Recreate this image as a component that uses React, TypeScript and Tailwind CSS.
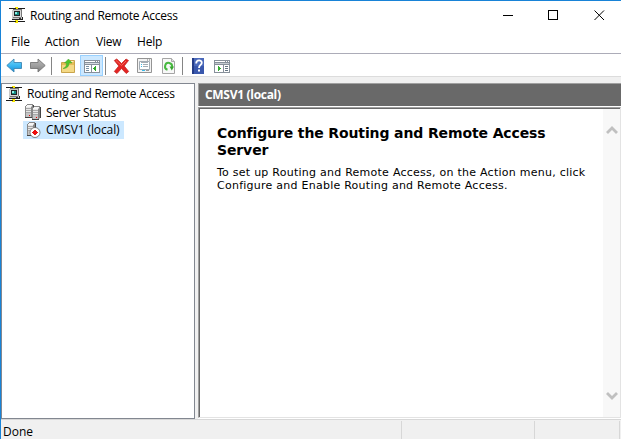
import type { ReactNode } from 'react';

function Svg({ w = 16, h = 16, crisp = false, className = '', children }: { w?: number; h?: number; crisp?: boolean; className?: string; children: ReactNode }) {
  return (
    <svg width={w} height={h} viewBox={`0 0 ${w} ${h}`} fill="none" shapeRendering={crisp ? 'crispEdges' : 'auto'} className={`block shrink-0 ${className}`}>
      {children}
    </svg>
  );
}

function RoutingIcon({ className = '' }: { className?: string }) {
  return (
    <Svg crisp className={className}>
      <path d="M0 1h16v1H0zM0 14h16v1H0z" fill="#1c1c1c" />
      <path d="M6 0h3v1H6zM7 1h2v1H7zM6 13h3v1H6zM6 15h3v1H6zM7 14h2v1H7z" fill="#f5e400" />
      <path d="M3 3h9v8H3z" fill="#dadada" />
      <path d="M4 2h9v1H4zM12 3h1v7h-1z" fill="#777" />
      <path d="M3 3h9v1H3zM3 4h1v6H3z" fill="#c8c8c8" />
      <path d="M5 4h6v5H5z" fill="#222" />
      <path d="M6 5h4v3H6z" fill="#168b83" />
      <path d="M6 5h2v2H6z" fill="#8bf2e6" />
      <path d="M3 10h10v2H3z" fill="#c6c6c6" />
      <path d="M4 10h8v1H4z" fill="#777" />
      <path d="M3 12h11v1H3zM13 10h1v3h-1z" fill="#222" />
      <path d="M10 11h2v1h-2z" fill="#333" />
    </Svg>
  );
}

function Tower({ x, y }: { x: number; y: number }) {
  return (
    <g transform={`translate(${x} ${y})`} shapeRendering="crispEdges">
      <path d="M2 0h6v1H2zM1 1h7v1H1zM0 2h8v11H0z" fill="#c4c4c4" />
      <path d="M2 0h6v1H2zM1 1h1v1H1zM0 2h1v11H0z" fill="#888" />
      <path d="M2 1h5v1H2zM1 2h5v1H1z" fill="#f6f6f6" />
      <path d="M1 3h5v1H1zM1 5h5v1H1zM1 7h5v1H1z" fill="#e6e6e6" />
      <path d="M1 4h5v1H1zM1 6h5v1H1zM1 8h5v1H1z" fill="#a8a8a8" />
      <path d="M6 3h1v10H6zM7 1h1v11H7z" fill="#888" />
      <path d="M0 13h7v1H0zM8 1h1v11H8z" fill="#444" />
    </g>
  );
}

function ServersIcon() {
  return (
    <Svg>
      <Tower x={0} y={0} />
      <Tower x={7} y={2} />
      <path d="M4 11h1v1H4zM11 13h1v1h-1z" fill="#f00000" />
    </Svg>
  );
}

function StoppedServerIcon() {
  return (
    <Svg>
      <Tower x={1} y={0} />
      <circle cx="9" cy="10.500" r="5" fill="#fff" stroke="#555" strokeWidth=".7" />
      <path d="M8 8h2v1h1v1h1v1h-1v1h-1v1H8v-1H7v-1H6v-1h1V9h1z" fill="#ed1010" shapeRendering="crispEdges" />
    </Svg>
  );
}

function Arrow({ back = false }: { back?: boolean }) {
  const id = back ? 'back' : 'forward';
  return (
    <Svg w={17} h={16}>
      <defs>
        <linearGradient id={id} x1="0" y1="0" x2="0" y2="1">
          <stop offset="0" stopColor={back ? '#78d4f7' : '#b8b8b8'} />
          <stop offset=".5" stopColor={back ? '#3cb8f2' : '#a0a0a0'} />
          <stop offset="1" stopColor={back ? '#168bd4' : '#7c7c7c'} />
        </linearGradient>
      </defs>
      <path
        transform={back ? undefined : 'translate(17 0) scale(-1 1)'}
        d="M.8 8.500 8 2v3.500h7.500v6H8V15z"
        fill={`url(#${id})`}
        stroke={back ? '#3c86b3' : '#777'}
        strokeWidth=".9"
        strokeLinejoin="round"
      />
    </Svg>
  );
}

function FolderUpIcon() {
  return (
    <Svg>
      <path d="M1.500 4.500h7l1.500-2h4.500v12h-13z" fill="#e5bd58" stroke="#c9a44c" />
      <path d="M2 7h12v7H2z" fill="#f4d985" />
      <path d="M10.500 3.500h3" stroke="#fff3c3" />
      <path d="M3 10.500C6 9.500 6.500 7.500 6.500 5H4.500L8.500 1l3.500 4H9c0 3-1.500 5.500-6 5.500z" fill="#4ec52d" stroke="#4aa22f" strokeWidth=".5" />
    </Svg>
  );
}

function TreePaneIcon() {
  return (
    <Svg crisp>
      <path d="M0 1h16v13H0z" fill="#87909a" />
      <path d="M1 2h10v1H1zM12 2h1v1h-1zM14 2h1v1h-1z" fill="#fff" />
      <path d="M1 4h14v1H1z" fill="#d5dbe0" />
      <path d="M1 6h6v7H1zM8 6h7v7H8z" fill="#fff" />
      <path d="M2 7h3v1H2zM2 9h3v1H2zM2 11h3v1H2z" fill="#7892a4" />
      <path d="M11 7h1v5h-1zM10 8h1v3h-1zM9 9h1v1H9z" fill="#2da927" />
    </Svg>
  );
}

function DeleteIcon() {
  return (
    <Svg w={17} h={17}>
      <path d="m1.300 2.500 2.500-1.500 4.700 4.500L13 1l2.500 1.500L11.200 8l4.500 5.500-2.500 2-4.700-5-4.500 5-2.700-2L5.800 8z" fill="#e32322" stroke="#c72b28" strokeWidth=".8" strokeLinejoin="round" />
      <path d="m3 2.500 5.500 5L13 3" stroke="#f66757" />
    </Svg>
  );
}

function PropertiesIcon() {
  return (
    <Svg>
      <path d="M.5.5h14v14H.5z" fill="#f3f3f3" stroke="#949494" />
      <path d="M2.500 3.500h10v8h-10z" fill="#fff" stroke="#a3acb4" />
      <path d="M10 2h1M12 2h1" stroke="#777" />
      <path d="M4 6.500h1M4 8.500h1" stroke="#39b9e8" />
      <path d="M6 6.500h5M6 8.500h5M4 4.500h7" stroke="#a4adb5" />
      <path d="M5 12h3v1H5z" fill="#39b9e8" />
      <path d="M9 12h3v1H9z" fill="#999" />
    </Svg>
  );
}

function RefreshIcon() {
  return (
    <Svg>
      <path d="M1.500.5h9l3 3v12h-12z" fill="#f8f8f8" stroke="#a5a5a5" />
      <path d="M10.500.500v3h3" fill="#ddd" stroke="#aaa" />
      <path d="M6.500 11.700A3.500 3.500 0 1 1 11 9" stroke="#48b940" strokeWidth="2" />
      <path d="M8.500 8.500H13l-2.200 4z" fill="#38a731" />
    </Svg>
  );
}

function HelpIcon() {
  return (
    <Svg>
      <path d="M1 0h12v16H1z" fill="#3957ac" />
      <path d="M1 0h2v16H1z" fill="#243c87" />
      <path d="M3 0h10v8H3z" fill="#4b69bb" />
      <path d="M5.200 5.500c0-4 5.600-4 5.600-.800C10.800 7 8 7 8 10" stroke="#fff" strokeWidth="1.800" />
      <path d="M7 11.500h2v2H7z" fill="#fff" />
    </Svg>
  );
}

function ActionPaneIcon() {
  return (
    <Svg crisp>
      <path d="M0 1h16v13H0z" fill="#87909a" />
      <path d="M1 2h10v1H1zM12 2h1v1h-1zM14 2h1v1h-1z" fill="#fff" />
      <path d="M1 4h14v1H1z" fill="#c4cbd0" />
      <path d="M1 6h8v7H1zM10 6h5v7h-5z" fill="#fff" />
      <path d="M4 7h1v5H4zM5 8h1v3H5zM6 9h1v1H6z" fill="#35ad31" />
      <path d="M11 7h3v1h-3zM11 9h3v1h-3zM11 11h3v1h-3z" fill="#647582" />
    </Svg>
  );
}

function Divider({ className = '' }: { className?: string }) {
  return <div className={`mt-[2px] h-[18px] w-px shrink-0 bg-[#858585] ${className}`} />;
}

export default function App() {
  return (
    <div className="flex h-[439px] w-[621px] flex-col overflow-hidden border-t border-l border-[#1883d7] bg-[#f0f0f0] font-['Open_Sans','Noto_Sans',sans-serif] text-[12px] leading-4 whitespace-nowrap text-black">
      <header className="flex h-[30px] shrink-0 items-start bg-white">
        <RoutingIcon className="mt-[6px] ml-2" />
        <h1 className="mt-[7px] ml-[5px] tracking-[-0.28px]">Routing and Remote Access</h1>
        <div className="mt-[9px] mr-[16px] ml-auto flex gap-[35px]">
          <Svg w={11} h={11} crisp><path d="M1 5h10v1H1z" fill="#000" /></Svg>
          <Svg w={11} h={11} crisp><path d="M.5.5h9v9h-9z" stroke="#000" /></Svg>
          <Svg w={11} h={11}><path d="m.5.5 9.500 9.500M10 .500.500 10" stroke="#000" /></Svg>
        </div>
      </header>
      <nav className="flex h-[22px] shrink-0 bg-white pt-[3px] pl-[10px]">
        <span className="w-[34px]">File</span>
        <span className="w-[51px] tracking-[-0.1px]">Action</span>
        <span className="w-[41px] tracking-[-0.2px]">View</span>
        <span className="tracking-[-0.2px]">Help</span>
      </nav>
      <div className="flex h-[24px] shrink-0 items-center border-t border-b border-t-[#acacb8] border-b-[#dcdcdc] bg-white pl-[5px]">
        <Arrow back />
        <div className="ml-[6px]"><Arrow /></div>
        <Divider className="ml-[5px]" />
        <div className="ml-[8px] pt-[2px]"><FolderUpIcon /></div>
        <div className="mt-px ml-[4px] flex h-[21px] w-[23px] items-end justify-center border border-[#99d1ff] bg-[#cce8ff]"><TreePaneIcon /></div>
        <Divider className="ml-[2px]" />
        <div className="ml-[7px] pt-[3px]"><DeleteIcon /></div>
        <div className="ml-[7px] pt-[2px]"><PropertiesIcon /></div>
        <div className="ml-[8px] pt-[2px]"><RefreshIcon /></div>
        <Divider className="ml-[5px]" />
        <div className="ml-[8px] pt-[2px]"><HelpIcon /></div>
        <div className="ml-[7px] pt-[4px]"><ActionPaneIcon /></div>
      </div>
      <main className="flex h-[342px] shrink-0 gap-[3px] pt-[6px]">
        <aside className="h-[336px] w-[194px] shrink-0 border border-[#828790] bg-white pt-[2px]">
          <div className="flex h-[18px] pl-[4px]">
            <RoutingIcon />
            <span className="ml-[5px] tracking-[-0.28px]">Routing and Remote Access</span>
          </div>
          <div className="flex h-[17px] pl-[23px]">
            <ServersIcon />
            <span className="ml-[5px] pt-px tracking-[-0.3px]">Server Status</span>
          </div>
          <div className="ml-[21px] flex h-[18px] w-[101px] items-center bg-[#cce8ff] pl-[3px]">
            <StoppedServerIcon />
            <span className="ml-[4px] tracking-[-0.1px]">CMSV1 (local)</span>
          </div>
        </aside>
        <section className="flex min-w-0 grow flex-col">
          <div className="h-[23px] shrink-0 border-t border-l border-[#a0a0a0] bg-[#696969] pt-[3px] pl-[6px] text-[12px] font-bold tracking-[-0.3px] text-white">CMSV1 (local)</div>
          <div className="h-[313px] bg-white pt-px">
            <div className="flex h-[311px] border border-t-[#a0a0a0] border-r-[#e3e3e3] border-b-[#e3e3e3] border-l-[#a0a0a0] bg-white">
              <div className="flex grow border-t border-l border-[#696969]">
                <article className="w-[403px] shrink-0 pt-[16px] pl-[17px] font-['DejaVu_Sans',sans-serif]">
                  <h2 className="text-[14px] leading-[17px] font-bold tracking-[-0.12px]">Configure the Routing and Remote Access<br />Server</h2>
                  <p className="mt-[7px] text-[11px] leading-[13px] tracking-[0.25px]">To set up Routing and Remote Access, on the Action menu, click<br />Configure and Enable Routing and Remote Access.</p>
                </article>
                <div className="flex grow flex-col items-center justify-between bg-[#f8f8f8] pt-[16px] pb-[16px]">
                  <Svg w={12} h={10}><path d="m1 8 5-5 5 5" stroke="#c0c0c0" strokeWidth="2.800" /></Svg>
                  <Svg w={12} h={10}><path d="m1 2 5 5 5-5" stroke="#c0c0c0" strokeWidth="2.800" /></Svg>
                </div>
              </div>
            </div>
          </div>
        </section>
      </main>
      <footer className="flex h-[20px] shrink-0 border-t border-[#d7d7d7] pt-px">
        <div className="w-[401px] border-r border-[#d7d7d7] pt-[3px] pl-[2px] leading-[15px]">Done</div>
        <div className="w-[133px] border-r border-[#d7d7d7]" />
        <div className="w-[85px] border-r border-[#d7d7d7]" />
      </footer>
    </div>
  );
}
